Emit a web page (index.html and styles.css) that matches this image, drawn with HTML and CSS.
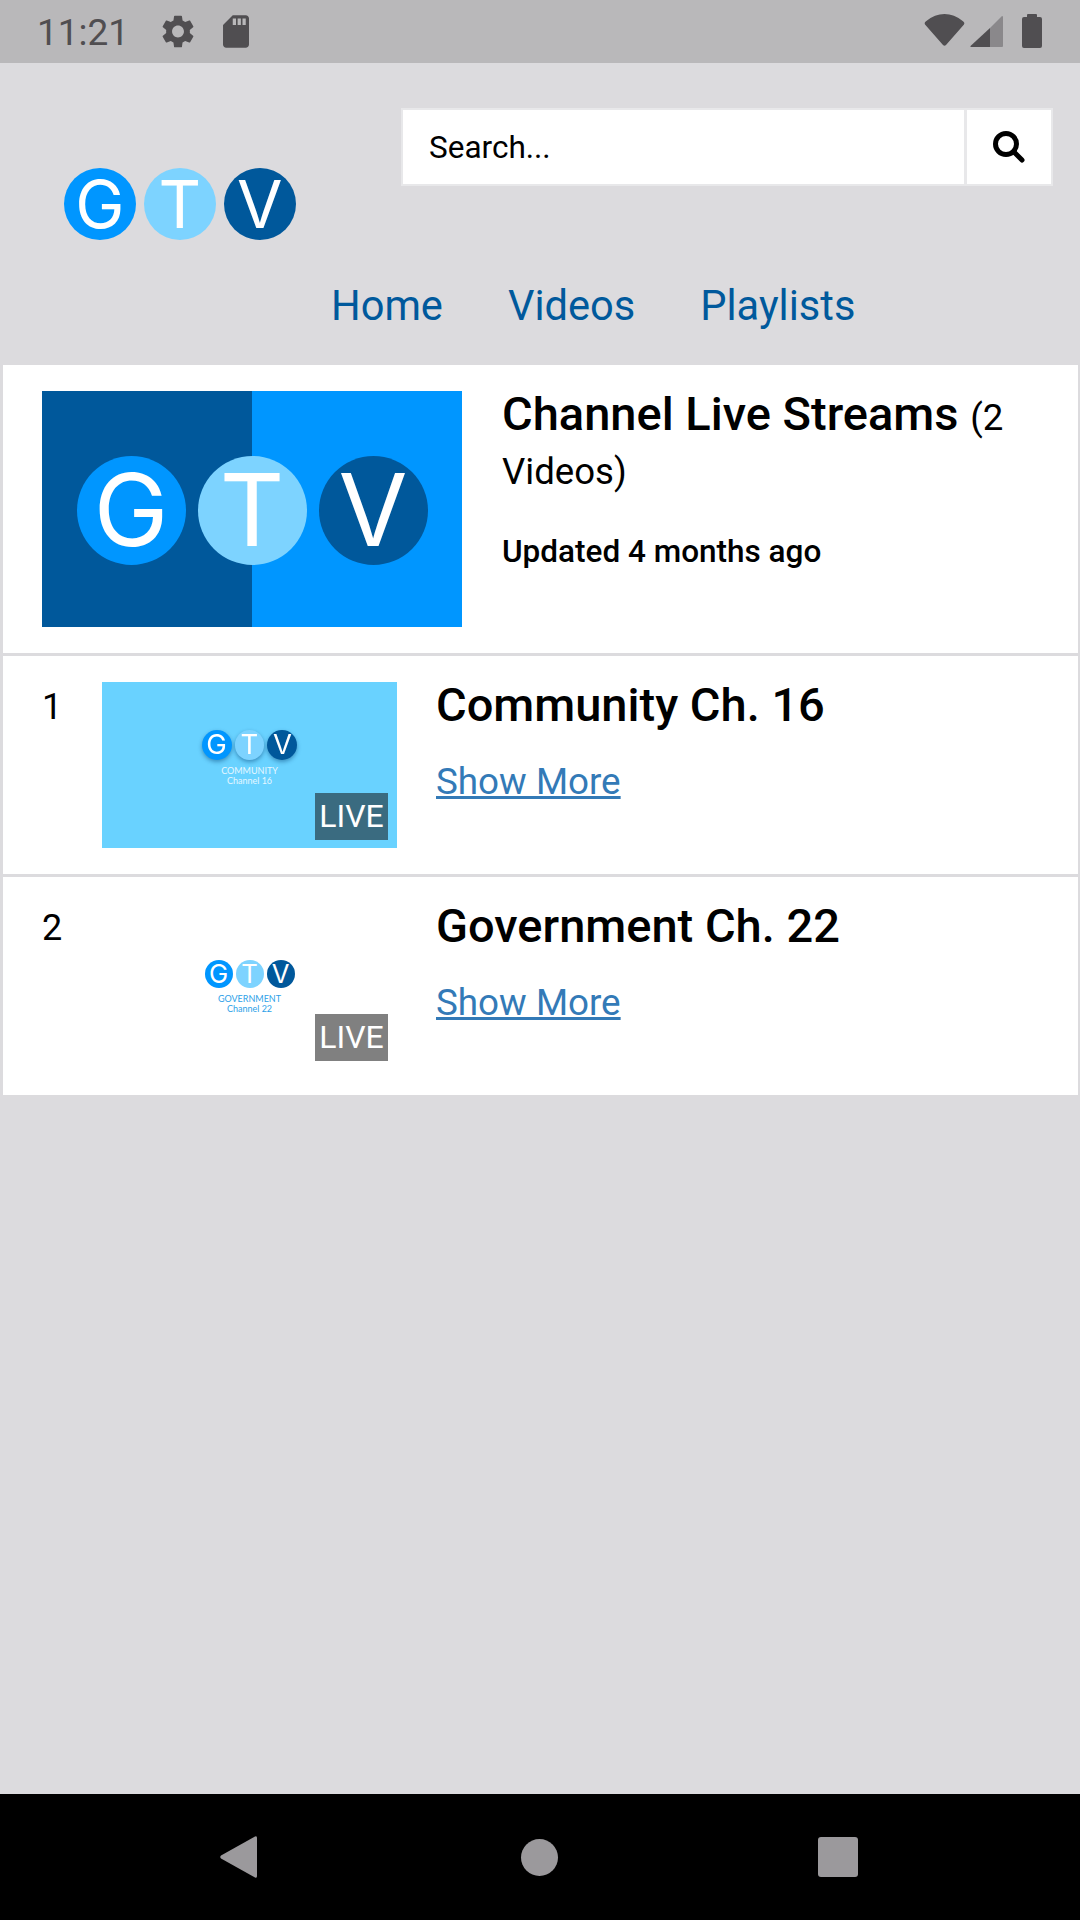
FILE: index.html
```html
<!DOCTYPE html>
<html lang="en">
<head>
    <meta charset="UTF-8">
    <meta name="viewport" content="width=device-width, initial-scale=1.0">
    <title>GTV Channel Live Streams</title>
    <link rel="stylesheet" href="styles.css">
</head>
<body>
    <div class="status-bar">
        <span class="clock">11:21</span>
        <svg class="icon-gear" viewBox="2.4 2 19.2 20"><path d="M19.14 12.94c.04-.3.06-.61.06-.94 0-.32-.02-.64-.07-.94l2.03-1.58c.18-.14.23-.41.12-.61l-1.92-3.32c-.12-.22-.37-.29-.59-.22l-2.39.96c-.5-.38-1.03-.7-1.62-.94l-.36-2.54c-.04-.24-.24-.41-.48-.41h-3.84c-.24 0-.43.17-.47.41l-.36 2.54c-.59.24-1.13.57-1.62.94l-2.39-.96c-.22-.08-.47 0-.59.22L2.74 8.87c-.12.21-.08.47.12.61l2.03 1.58c-.05.3-.09.63-.09.94s.02.64.07.94l-2.03 1.58c-.18.14-.23.41-.12.61l1.92 3.32c.12.22.37.29.59.22l2.39-.96c.5.38 1.03.7 1.62.94l.36 2.54c.05.24.24.41.48.41h3.84c.24 0 .44-.17.47-.41l.36-2.54c.59-.24 1.13-.56 1.62-.94l2.39.96c.22.08.47 0 .59-.22l1.92-3.32c.12-.22.07-.47-.12-.61l-2.01-1.58zM12 15.6c-1.98 0-3.6-1.62-3.6-3.6s1.62-3.6 3.6-3.6 3.6 1.62 3.6 3.6-1.62 3.6-3.6 3.6z"/></svg>
        <svg class="icon-sd" viewBox="4 2 16 20"><path d="M18 2h-8L4.02 8 4 20c0 1.1.9 2 2 2h12c1.1 0 2-.9 2-2V4c0-1.1-.9-2-2-2zm-6 6h-2V4h2v4zm3 0h-2V4h2v4zm3 0h-2V4h2v4z"/></svg>
        <span class="status-right">
            <svg class="icon-wifi" viewBox="0 0 41 32"><path d="M19 31 1 10.5Q0 8.500 2 7.200C8 2.500 14 0 20.500 0S33 2.500 39 7.200Q41 8.500 40 10.500L22 31Q20.500 32.500 19 31Z"/></svg>
            <svg class="icon-signal" viewBox="0 0 33 31"><path class="signal-dim" d="M20 12 32 0Q33 0 33 1V30Q33 31 32 31H20Z"/><path d="M20 12V31H1Q0 31 .5 30Z"/></svg>
            <svg class="icon-battery" viewBox="0 0 20 34"><path d="M5 3V1Q5 0 6 0H14Q15 0 15 1V3H18Q20 3 20 5V32Q20 34 18 34H2Q0 34 0 32V5Q0 3 2 3Z"/></svg>
        </span>
    </div>

    <div class="page">
        <header class="header">
            <div class="top-row">
                <div class="logo logo-site">
                    <span class="dot dot-g">G</span>
                    <span class="dot dot-t">T</span>
                    <span class="dot dot-v">V</span>
                </div>
                <form class="search">
                    <input class="search-input" type="text" placeholder="Search...">
                    <button class="search-btn" type="button" aria-label="Search">
                        <svg class="icon-search" viewBox="0 0 32 32"><circle cx="13" cy="13" r="10.500"/><path d="M20.500 20.500 29 29"/></svg>
                    </button>
                </form>
            </div>
            <nav class="nav">
                <a href="#">Home</a>
                <a href="#">Videos</a>
                <a href="#">Playlists</a>
            </nav>
        </header>

        <div class="panel">
            <div class="row row-head">
                <div class="cover">
                    <div class="logo logo-cover">
                        <span class="dot dot-g">G</span>
                        <span class="dot dot-t">T</span>
                        <span class="dot dot-v">V</span>
                    </div>
                </div>
                <div class="head-text">
                    <h2 class="head-title">Channel Live Streams <small>(2</small> <small>Videos)</small></h2>
                    <p class="updated">Updated 4 months ago</p>
                </div>
            </div>

            <div class="row">
                <div class="num">1</div>
                <div class="thumb thumb-community">
                    <div class="logo logo-thumb shadowed">
                        <span class="dot dot-g">G</span>
                        <span class="dot dot-t">T</span>
                        <span class="dot dot-v">V</span>
                    </div>
                    <div class="thumb-caption">COMMUNITY</div>
                    <div class="thumb-caption">Channel 16</div>
                    <span class="live live-blue">LIVE</span>
                </div>
                <div class="item-text">
                    <h3 class="item-title">Community Ch. 16</h3>
                    <a class="more" href="#">Show More</a>
                </div>
            </div>

            <div class="row">
                <div class="num">2</div>
                <div class="thumb thumb-government">
                    <div class="logo logo-thumb">
                        <span class="dot dot-g">G</span>
                        <span class="dot dot-t">T</span>
                        <span class="dot dot-v">V</span>
                    </div>
                    <div class="thumb-caption">GOVERNMENT</div>
                    <div class="thumb-caption">Channel 22</div>
                    <span class="live live-grey">LIVE</span>
                </div>
                <div class="item-text">
                    <h3 class="item-title">Government Ch. 22</h3>
                    <a class="more" href="#">Show More</a>
                </div>
            </div>
        </div>
    </div>

    <div class="nav-bar">
        <svg class="nav-back" viewBox="0 0 37 42"><path d="M35 .5Q37-.5 37 2V40Q37 42.500 35 41.500L1 22.500Q-.5 21 1 19.500Z"/></svg>
        <span class="nav-home"></span>
        <span class="nav-recent"></span>
    </div>
</body>
</html>
```

FILE: styles.css
```css
html, body {
    margin: 0;
    padding: 0;
}
body {
    width: 1080px;
    height: 1920px;
    display: flex;
    flex-direction: column;
    font-family: Roboto, sans-serif;
    background: #dcdbde;
    color: #000;
    overflow: hidden;
}

/* status bar */
.status-bar {
    height: 63px;
    flex: none;
    display: flex;
    align-items: flex-start;
    background: #b9b8ba;
    fill: #504e51;
    color: #504e51;
}
.clock {
    margin: 11px 0 0 37px;
    width: 125px;
    font-size: 37px;
    line-height: 43px;
}
.icon-gear {
    width: 32px;
    height: 33px;
    margin-top: 15px;
}
.icon-sd {
    width: 26px;
    height: 33px;
    margin: 15px 0 0 29px;
}
.status-right {
    margin-left: auto;
    display: flex;
    align-items: flex-start;
    padding-right: 38px;
}
.icon-wifi {
    width: 41px;
    height: 32px;
    margin-top: 14px;
}
.icon-signal {
    width: 33px;
    height: 31px;
    margin: 16px 0 0 5px;
}
.signal-dim {
    fill: #8a888b;
}
.icon-battery {
    width: 20px;
    height: 34px;
    margin: 14px 0 0 19px;
}

/* header */
.page {
    flex: 1;
}
.header {
    height: 302px;
    box-sizing: border-box;
}
.top-row {
    display: flex;
    align-items: flex-start;
    padding: 45px 27px 0 64px;
}
.search {
    margin: 0 0 0 auto;
    display: flex;
    width: 652px;
    height: 78px;
    box-sizing: border-box;
    border: 2px solid #e8e8ea;
    background: #e8e8ea;
}
.search-input {
    flex: 1;
    min-width: 0;
    border: 0;
    padding: 0 0 0 26px;
    margin: 0;
    outline: 0;
    background: #fff;
    font-family: Roboto, sans-serif;
    font-size: 31.5px;
    color: #000;
}
.search-input::placeholder {
    color: #000;
    opacity: 1;
}
.search-btn {
    width: 84px;
    flex: none;
    margin: 0 0 0 3px;
    padding: 0;
    border: 0;
    background: #fff;
    display: flex;
    align-items: center;
    justify-content: center;
}
.icon-search {
    width: 32px;
    height: 32px;
    fill: none;
    stroke: #000;
    stroke-width: 5;
    stroke-linecap: round;
}
.nav {
    display: flex;
    gap: 65px;
    padding: 42px 0 0 331px;
}
.nav a {
    font-size: 41.6px;
    line-height: 48px;
    color: #00599c;
    text-decoration: none;
}

/* logo: the dot size follows the font size of each logo */
.logo {
    display: flex;
    justify-content: center;
    gap: 0.12em;
    font-family: Inter, sans-serif;
    line-height: 1;
    color: #fff;
}
.dot {
    width: 1.09em;
    height: 1.09em;
    border-radius: 50%;
    display: flex;
    align-items: center;
    justify-content: center;
}
.dot-g {
    background: #0096ff;
}
.dot-t {
    background: #7dd3ff;
}
.dot-v {
    background: #00589b;
}
.logo-site {
    font-size: 66px;
    margin-top: 60px;
}
.logo-cover {
    font-size: 100px;
    margin-top: 2px;
}
.logo-thumb {
    font-size: 27.5px;
    gap: 3px;
    margin-bottom: 6px;
}
.thumb-government .logo-thumb {
    font-size: 25.7px;
}
.shadowed {
    filter: drop-shadow(0 2px 2px rgba(0, 60, 110, 0.45));
}

/* list panel */
.panel {
    margin: 0 2px 0 3px;
    display: flex;
    flex-direction: column;
    gap: 3px;
}
.row {
    display: flex;
    align-items: flex-start;
    background: #fff;
    height: 218px;
    box-sizing: border-box;
    padding: 26px 30px 0 39px;
}
.row-head {
    height: 288px;
}
.cover {
    width: 420px;
    height: 236px;
    flex: none;
    display: flex;
    align-items: center;
    justify-content: center;
    background: linear-gradient(90deg, #00589b 50%, #0096ff 50%);
}
.head-text {
    margin-left: 40px;
    flex: 1;
}
.head-title {
    margin: -4px 0 0;
    font-size: 47px;
    line-height: 54px;
    font-weight: 500;
}
.head-title small {
    font-size: 36.6px;
    line-height: 1;
    font-weight: 400;
}
.updated {
    margin: 39px 0 0;
    font-size: 31.5px;
    line-height: 36px;
    font-weight: 500;
}
.num {
    width: 60px;
    flex: none;
    padding-top: 5px;
    font-size: 36px;
    line-height: 40px;
}
.thumb {
    position: relative;
    width: 295px;
    height: 166px;
    flex: none;
    box-sizing: border-box;
    text-align: center;
}
.thumb-community {
    background: #69d2ff;
    color: #e6f7ff;
    padding-top: 48px;
}
.thumb-government {
    background: #fff;
    color: #2d9fe8;
    padding-top: 57px;
}
.thumb-caption {
    font-family: Lato, sans-serif;
    font-size: 9px;
    line-height: 10px;
}
.live {
    position: absolute;
    right: 9px;
    bottom: 8px;
    width: 73px;
    height: 47px;
    color: #fff;
    font-size: 32px;
    line-height: 47px;
    text-align: center;
}
.live-blue {
    background: #3a6b80;
}
.live-grey {
    background: #808080;
}
.item-text {
    margin-left: 39px;
}
.item-title {
    margin: 0;
    font-size: 47px;
    line-height: 46px;
    font-weight: 500;
}
.more {
    display: inline-block;
    margin-top: 33px;
    font-size: 36.8px;
    line-height: 42px;
    color: #337ab7;
}

/* nav bar */
.nav-bar {
    height: 126px;
    flex: none;
    background: #000;
    display: flex;
    align-items: center;
    padding-left: 220px;
}
.nav-back {
    width: 37px;
    height: 42px;
    fill: #9b999c;
}
.nav-home {
    width: 37px;
    height: 37px;
    margin-left: 264px;
    border-radius: 50%;
    background: #9b999c;
}
.nav-recent {
    width: 40px;
    height: 40px;
    margin-left: 260px;
    border-radius: 3px;
    background: #9b999c;
}
```
